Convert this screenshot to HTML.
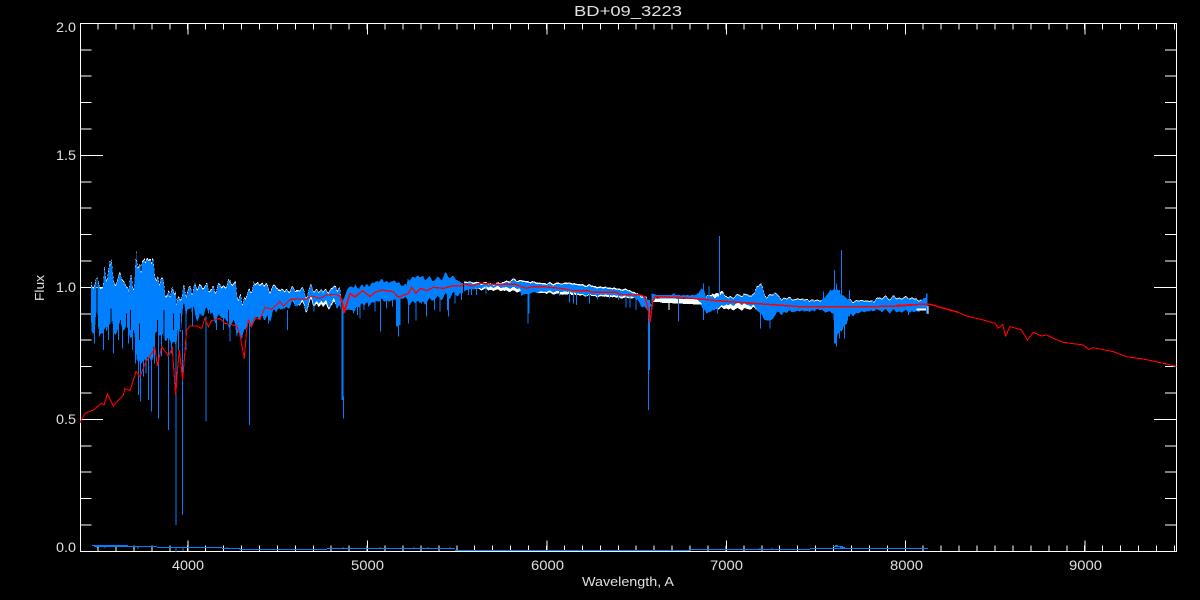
<!DOCTYPE html>
<html>
<head>
<meta charset="utf-8">
<style>
html,body{margin:0;padding:0;background:#000;width:1200px;height:600px;overflow:hidden}
svg{display:block}
text{font-family:"Liberation Sans",sans-serif;fill:#fff;fill-opacity:.88}
</style>
</head>
<body>
<svg width="1200" height="600" viewBox="0 0 1200 600" xmlns="http://www.w3.org/2000/svg">
<defs>
<filter id="f1" filterUnits="userSpaceOnUse" x="80" y="230" width="265" height="220" color-interpolation-filters="sRGB">
<feTurbulence type="fractalNoise" baseFrequency="0.22 0" numOctaves="1" seed="4" result="n"/>
<feDisplacementMap in="SourceGraphic" in2="n" scale="30" xChannelSelector="A" yChannelSelector="R"/>
</filter>
<filter id="f2" filterUnits="userSpaceOnUse" x="343" y="250" width="120" height="110" color-interpolation-filters="sRGB">
<feTurbulence type="fractalNoise" baseFrequency="0.25 0" numOctaves="1" seed="9" result="n"/>
<feDisplacementMap in="SourceGraphic" in2="n" scale="12" xChannelSelector="A" yChannelSelector="R"/>
</filter>
<filter id="f4" filterUnits="userSpaceOnUse" x="463" y="250" width="190" height="110" color-interpolation-filters="sRGB">
<feTurbulence type="fractalNoise" baseFrequency="0.25 0" numOctaves="1" seed="6" result="n"/>
<feDisplacementMap in="SourceGraphic" in2="n" scale="5" xChannelSelector="A" yChannelSelector="R"/>
</filter>
<filter id="f3" filterUnits="userSpaceOnUse" x="650" y="250" width="300" height="110" color-interpolation-filters="sRGB">
<feTurbulence type="fractalNoise" baseFrequency="0.25 0" numOctaves="1" seed="13" result="n"/>
<feDisplacementMap in="SourceGraphic" in2="n" scale="9" xChannelSelector="A" yChannelSelector="R"/>
</filter>
</defs>
<rect width="1200" height="600" fill="#000"/>

<!-- axes -->
<g stroke="#fff" fill="none" shape-rendering="crispEdges">
<rect x="80.5" y="23.5" width="1096" height="528" stroke-width="1"/>
<line x1="97.5" y1="26.5" x2="1176" y2="26.5" stroke-width="6" stroke-dasharray="1 16.94"/>
<line x1="97.5" y1="548.5" x2="1176" y2="548.5" stroke-width="6" stroke-dasharray="1 16.94"/>
<line x1="187.6" y1="29" x2="1176" y2="29" stroke-width="11" stroke-dasharray="1 178.4"/>
<line x1="187.6" y1="546" x2="1176" y2="546" stroke-width="11" stroke-dasharray="1 178.4"/>
<line x1="86" y1="22.9" x2="86" y2="552" stroke-width="11" stroke-dasharray="1 25.4"/>
<line x1="1170.5" y1="22.9" x2="1170.5" y2="552" stroke-width="11" stroke-dasharray="1 25.4"/>
<line x1="92" y1="22.9" x2="92" y2="552" stroke-width="22" stroke-dasharray="1 131"/>
<line x1="1165" y1="22.9" x2="1165" y2="552" stroke-width="22" stroke-dasharray="1 131"/>
</g>

<!-- spectrum left region -->
<g filter="url(#f1)">
<g transform="translate(60,230) scale(.3333)" shape-rendering="crispEdges">
<path fill="#fff" transform="translate(0,-4)" d="M97 155L105 165L125 175L135 110L150 125L165 150L185 150L205 180L220 110L232 70L245 130L255 90L268 90L285 120L300 165L310 150L325 200L335 175L350 225L362 210L375 205L385 180L410 160L430 175L445 185L465 165L490 175L525 160L550 215L580 160L625 170L660 180L700 185L740 185L800 185L830 170L845 195L845 230L97 230Z"/>
<path fill="#0080ff" d="M97 155L105 165L125 175L135 110L150 125L165 150L185 150L205 180L220 110L232 70L245 130L255 90L268 90L285 120L300 165L310 150L325 200L335 175L350 225L362 210L375 205L385 180L410 160L430 175L445 185L465 165L490 175L525 160L550 215L580 160L625 170L660 180L700 185L740 185L800 185L830 170L845 195L845 235L800 215L740 220L680 230L640 250L590 270L560 290L540 320L510 280L480 260L440 250L420 260L385 230L365 290L345 350L320 320L290 310L270 380L240 400L220 340L200 290L170 300L150 280L125 310L105 300L97 250Z"/>
</g>
</g>
<g transform="translate(60,230) scale(.3333)" stroke="#0080ff" stroke-width="3" fill="none" shape-rendering="crispEdges">
<path d="M103 240V340M118 260V320M130 260V360M146 260V330M160 260V370M175 260V330M187 280V355M205 270V340M217 300V360M227 300V400M235 300V495M241 300V515M250 300V440M258 300V430M265 230V510M275 300V545M284 290V400M295 300V565M305 300V380M325 300V600M335 280V370M355 260V360M438 260V575M568 280V585M378 220V360M398 240V290M470 240V300M490 250V300M510 270V335M530 270V300M682 240V300M625 260V280M762 220V245"/>
<path d="M348 300V885"/>
<path d="M368 300V855"/>
<path d="M847 210V510" stroke-width="6"/>
<path d="M850 500V565"/>
</g>
<!-- black gaps in left band -->
<g transform="translate(60,230) scale(.3333)" stroke="#000" stroke-width="3" fill="none" shape-rendering="crispEdges">
<path d="M153 235V300M182 270V300M200 250V300M212 240V300M238 280V330M292 270V320M312 240V330M340 250V300M362 250V300M372 240V300M420 250V290M448 240V290M505 240V280"/>
</g>

<!-- spectrum middle region -->
<g filter="url(#f2)">
<g transform="translate(340,260) scale(.3333)" shape-rendering="crispEdges">
<path fill="#0080ff" d="M10 120L20 90L45 72L60 85L90 70L110 65L140 65L175 65L195 80L205 55L250 50L280 60L325 45L360 65L372 68L372 98L340 105L290 115L260 125L220 130L190 115L170 120L110 125L80 130L40 150L20 150L10 150Z"/>
<path fill="#0080ff" d="M170 110H186V195H170Z"/>
</g>
</g>
<g filter="url(#f4)">
<g transform="translate(340,260) scale(.3333)" shape-rendering="crispEdges">
<path fill="#fff" d="M372 65L400 66L470 71L520 58L560 63L620 70L680 68L750 76L800 82L860 88L920 111L920 118L372 85Z"/>
<path fill="#0080ff" d="M372 68L400 70L470 75L520 62L560 67L620 74L680 72L750 80L800 86L860 92L920 115L938 140L920 150L880 110L800 105L740 105L680 95L600 95L570 100L545 105L540 85L450 80L380 90L372 95Z"/>
</g>
</g>
<g transform="translate(340,260) scale(.3333)" shape-rendering="crispEdges">
<path fill="#fff" d="M940 115L1020 118L1020 129L940 126Z"/>
<path fill="#0080ff" d="M935 100L950 105L1020 105L1020 117L950 113L935 130Z"/>
</g>
<g transform="translate(340,260) scale(.3333)" stroke="#0080ff" stroke-width="3" fill="none" shape-rendering="crispEdges">
<path d="M20 110V150M40 110V160M52 120V165M60 110V175M72 120V150M85 110V140M105 120V155M122 100V215M140 110V145M158 110V140M175 150V230M205 110V190M228 100V182M245 110V130M260 110V170M283 110V150M300 110V155M322 100V150M325 110V170M345 100V130M365 90V120M385 85V105M395 85V105M410 85V105M438 80V100M545 85V107M612 85V98M658 85V107M688 90V128M700 90V130M710 90V135M748 95V130M772 100V118M808 100V115M835 100V120M858 100V143M870 100V143M888 105V150M1015 110V185"/>
<path d="M564 85V190"/>
<path d="M566 85V160" stroke-width="6"/>
<path d="M927 120V330" stroke-width="6"/>
<path d="M926 320V450"/>
<path d="M8 120V360" stroke-width="6"/>
</g>

<!-- spectrum right region -->
<g filter="url(#f3)">
<g transform="translate(660,230) scale(.3333)" shape-rendering="crispEdges">
<path fill="#fff" transform="translate(0,-3)" d="M130 200L190 190L200 205L250 195L280 200L290 170L302 165L320 205L345 190L360 205L400 210L440 210L480 215L520 210L570 215L640 215L660 205L700 205L760 205L780 215L780 240L130 240Z"/>
<path fill="#0080ff" d="M30 195L60 195L110 195L118 185L130 180L135 200L150 195L165 205L190 190L200 205L250 195L280 200L290 170L302 165L320 205L345 190L360 205L400 210L440 210L480 215L520 175L545 190L570 215L640 215L660 205L700 205L760 205L780 215L800 195L803 235L780 245L700 245L640 240L570 255L560 280L525 320L520 250L480 240L400 245L350 250L330 275L310 265L290 235L250 220L200 225L170 235L140 250L125 230L110 210L60 205L30 205Z"/>
</g>
</g>
<g transform="translate(660,230) scale(.3333)" shape-rendering="crispEdges">
<path fill="#fff" d="M0 205L110 208L125 220L125 224L0 218Z"/>
<path fill="#0080ff" d="M0 195H40V205H0Z"/>
<path fill="#fff" d="M770 235H802V242H770Z"/>
</g>
<g transform="translate(660,230) scale(.3333)" stroke="#0080ff" stroke-width="3" fill="none" shape-rendering="crispEdges">
<path d="M178 18V215M130 160V270M55 205V270M120 185V210M147 168V200M301 240V295M330 230V295M343 188V240M490 185V225M523 120V340M529 160V350M545 60V260M538 180V325M553 200V325M569 180V260M173 215V250M745 205V255M638 210V235"/>
<path d="M525 220V340" stroke-width="6"/>
<path d="M800 190V250" stroke-width="4"/>
</g>
<g stroke="#fff" stroke-width="1" fill="none" shape-rendering="crispEdges">
<path d="M928 306V314M669 303V310"/>
</g>

<!-- bottom error spectrum -->
<g stroke="#0080ff" stroke-width="1" fill="none" shape-rendering="crispEdges">
<path d="M92 545.5H128M94 546.5H128M128 546.5H157M157 547.5H222M222 548.5H240M240 549.5H327M327 548.5H455M455 550.5H690M690 549.5H810M810 548.5H928"/>
<path d="M97 546V548M105 546V548M123 545V547M138 547V549M176 548V552M183 548V551M227 547V549M240 548V550M343 547V549M380 547V549M414 547V549M428 547V549M450 547V549M760 548V549M772 548V549M833 546.5H843M835 545.5H838M840 547.5H845"/>
</g>

<!-- red model -->
<g fill="none" stroke="#ff0000" stroke-linejoin="miter" shape-rendering="crispEdges">
<path transform="translate(60,230) scale(.3333)" stroke-width="3.3" d="M60 578L75 550L100 540L125 520L132 525L142 492L160 528L175 510L190 495L195 475L210 482L228 425L240 440L258 395L285 355L292 408L305 350L325 378L337 355L345 470L347 495L352 425L358 360L368 450L380 300L390 288L410 288L425 295L435 265L445 290L455 272L480 265L495 280L530 287L540 315L553 385L560 300L565 270L575 290L585 262L600 268L615 232L635 238L660 215L670 228L690 208L740 207L755 198L780 205L800 195L830 193L845 205L855 245L870 192L885 202L900 190"/>
<path transform="translate(340,260) scale(.3333)" stroke-width="4" d="M0 105L12 155L30 100L45 110L68 92L90 110L105 97L125 90L160 95L175 112L205 100L215 82L228 100L240 85L260 92L280 82L310 85L340 77L360 78L375 72L395 78L420 70L470 73L525 73L560 85L575 80L610 80L660 85L700 92L745 92L755 97L830 97L840 103L880 105L895 103L915 110L925 150L930 188L938 125L945 110L1020 112"/>
<path transform="translate(660,230) scale(.3333)" stroke-width="4.5" d="M0 200L100 205L170 212L250 218L350 225L420 230L520 230L560 230L640 230L720 228L780 223L810 223L895 247"/>
<path transform="translate(900,290) scale(.3333)" stroke-width="3.3" d="M-10 45L90 43L130 55L170 65L200 78L250 90L285 100L295 115L308 103L317 138L330 110L365 120L382 150L400 127L425 138L440 135L460 145L490 157L550 165L565 178L580 173L640 185L680 200L730 207L800 222L830 230"/>
</g>

<!-- labels -->
<text x="574" y="16" font-size="15" textLength="108" lengthAdjust="spacingAndGlyphs">BD+09_3223</text>
<g font-size="13.5">
<text x="56" y="32" textLength="20" lengthAdjust="spacingAndGlyphs">2.0</text>
<text x="56" y="160" textLength="20" lengthAdjust="spacingAndGlyphs">1.5</text>
<text x="56" y="292" textLength="20" lengthAdjust="spacingAndGlyphs">1.0</text>
<text x="56" y="424" textLength="20" lengthAdjust="spacingAndGlyphs">0.5</text>
<text x="56" y="552" textLength="20" lengthAdjust="spacingAndGlyphs">0.0</text>
<text x="172" y="570" textLength="32" lengthAdjust="spacingAndGlyphs">4000</text>
<text x="351" y="570" textLength="33" lengthAdjust="spacingAndGlyphs">5000</text>
<text x="531" y="570" textLength="33" lengthAdjust="spacingAndGlyphs">6000</text>
<text x="710" y="570" textLength="33" lengthAdjust="spacingAndGlyphs">7000</text>
<text x="890" y="570" textLength="33" lengthAdjust="spacingAndGlyphs">8000</text>
<text x="1069" y="570" textLength="33" lengthAdjust="spacingAndGlyphs">9000</text>
<text x="582" y="586" font-size="13" textLength="92" lengthAdjust="spacingAndGlyphs">Wavelength, A</text>
<text transform="translate(44,301) rotate(-90)" font-size="13" textLength="26" lengthAdjust="spacingAndGlyphs">Flux</text>
</g>
</svg>
</body>
</html>
